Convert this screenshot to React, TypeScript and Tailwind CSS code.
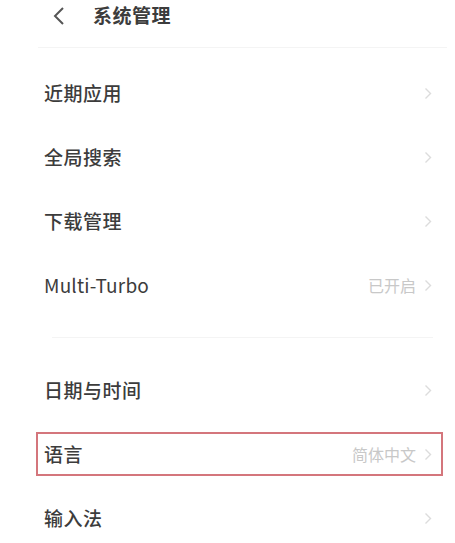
import React from "react";

function Chevron() {
  return (
    <svg width="8" height="13" viewBox="0 0 8 13" className="shrink-0">
      <path d="M1.5 1.5 L6.5 6.5 L1.5 11.5" fill="none" stroke="#dcdcdc" strokeWidth="1.4" />
    </svg>
  );
}

function Row({
  label,
  value,
  highlight,
  latin,
}: {
  label: string;
  value?: string;
  highlight?: boolean;
  latin?: boolean;
}) {
  return (
    <div className="h-[64px] flex items-center">
      <div
        className={
          "ml-[36px] w-[407px] h-[44px] flex items-center pl-[6px] pr-[9px] border-2 " +
          (highlight ? "border-[#d4767c]" : "border-transparent")
        }
      >
        <span
          className={
            "flex-1 text-[19px] text-[#3c3c3c] " +
            (latin ? "font-normal tracking-[0.2px]" : "font-medium tracking-[0.5px]")
          }
        >
          {label}
        </span>
        {value && <span className="text-[16px] text-[#c8c8c8] mr-[8px]">{value}</span>}
        <Chevron />
      </div>
    </div>
  );
}

export default function App() {
  return (
    <div
      className="w-[455px] h-[543px] bg-white overflow-hidden"
      style={{ fontFamily: '"Noto Sans CJK SC", "Noto Sans", sans-serif' }}
    >
      <div className="h-[47px] flex items-center pb-[16px]">
        <svg width="14" height="20" viewBox="0 0 14 20" className="ml-[52px]">
          <path d="M11 2 L3 10 L11 18" fill="none" stroke="#555" strokeWidth="2" />
        </svg>
        <span className="ml-[27px] text-[19px] font-bold text-[#3c3c3c] tracking-[0.5px]">系统管理</span>
      </div>
      <div className="ml-[38px] w-[409px] h-px bg-[#f4f4f4]" />
      <div className="h-[13px]" />
      <Row label="近期应用" />
      <Row label="全局搜索" />
      <Row label="下载管理" />
      <Row label="Multi-Turbo" value="已开启" latin />
      <div className="h-[20px]" />
      <div className="ml-[52px] w-[381px] h-px bg-[#f4f4f4]" />
      <div className="h-[20px]" />
      <Row label="日期与时间" />
      <Row label="语言" value="简体中文" highlight />
      <Row label="输入法" />
    </div>
  );
}
